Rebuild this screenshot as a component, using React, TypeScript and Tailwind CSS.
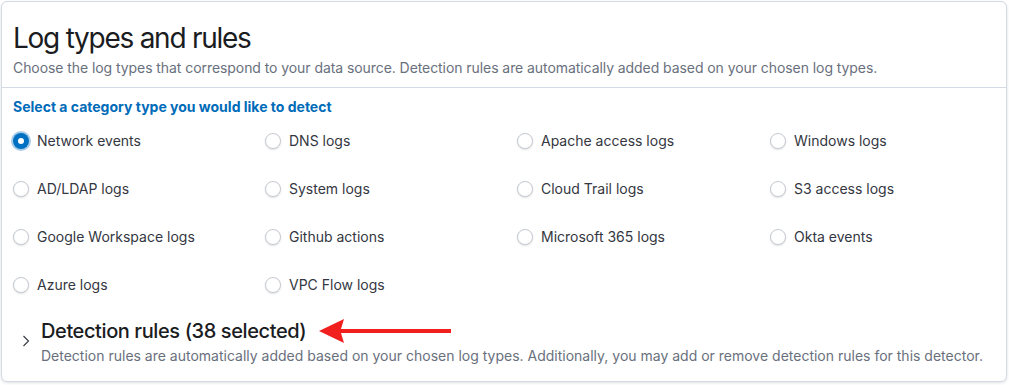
import React from "react";

const options = [
  "Network events",
  "DNS logs",
  "Apache access logs",
  "Windows logs",
  "AD/LDAP logs",
  "System logs",
  "Cloud Trail logs",
  "S3 access logs",
  "Google Workspace logs",
  "Github actions",
  "Microsoft 365 logs",
  "Okta events",
  "Azure logs",
  "VPC Flow logs",
];

function Radio({ checked }: { checked: boolean }) {
  if (checked) {
    return (
      <span className="flex h-4 w-4 shrink-0 items-center justify-center rounded-full bg-[#0071c2] shadow-[0_0_0_2px_#a9cbe8]">
        <span className="h-[6px] w-[6px] rounded-full bg-white" />
      </span>
    );
  }
  return (
    <span className="h-4 w-4 shrink-0 rounded-full border border-[#c6cad1] bg-white shadow-[0_1px_2px_rgba(0,0,0,0.12)]" />
  );
}

export default function App() {
  return (
    <div className="h-[385px] w-[1009px] bg-white pl-px pt-px font-['Inter',sans-serif]">
      <div className="relative h-[381px] w-[1006px] rounded-[6px] border border-[#d3dae6] bg-white shadow-[0_1px_3px_rgba(0,0,0,0.12)]">
        <div className="border-b border-[#d3dae6] px-[11px] pb-[9px] pt-[18px]">
          <h1 className="text-[28px] leading-[36px] font-normal text-[#1a1c21] tracking-[-0.045em]">
            Log types and rules
          </h1>
          <p className="mt-[2px] text-[14px] leading-5 tracking-[-0.07px] text-[#69707d]">
            Choose the log types that correspond to your data source. Detection rules are automatically added based on your chosen log types.
          </p>
        </div>
        <div className="px-[11px] pt-[9px] pb-[14px]">
          <div className="text-[14px] leading-5 font-bold text-[#006bb8]">
            Select a category type you would like to detect
          </div>
          <div className="mt-[14px] grid grid-cols-[252px_252px_253px_1fr] gap-y-[28px]">
            {options.map((o, i) => (
              <label key={o} className="flex h-5 items-center gap-2 text-[14px] leading-5 text-[#343741]">
                <Radio checked={i === 0} />
                <span>{o}</span>
              </label>
            ))}
          </div>
          <div className="mt-[24px] flex items-center">
            <div className="flex w-[28px] shrink-0 items-center justify-start pb-1 pl-[9px]">
              <svg width="8" height="12" viewBox="0 0 8 12" fill="none">
                <polyline points="1.5,1 6.5,6 1.5,11" stroke="#343741" strokeWidth="1.1" />
              </svg>
            </div>
            <div>
              <div className="text-[20px] leading-6 font-medium tracking-[-0.02em] text-[#1a1c21]">
                Detection rules (38 selected)
              </div>
              <div className="mt-[3px] text-[14px] leading-5 text-[#69707d]">
                Detection rules are automatically added based on your chosen log types. Additionally, you may add or remove detection rules for this detector.
              </div>
            </div>
          </div>
        </div>
        <svg
          className="absolute left-[316px] top-[316px]"
          width="134"
          height="26"
          viewBox="0 0 134 26"
        >
          <polygon points="1,13 26,1 23,11 133,11 133,15 23,15 26,25" fill="#f21f1f" />
        </svg>
      </div>
    </div>
  );
}
